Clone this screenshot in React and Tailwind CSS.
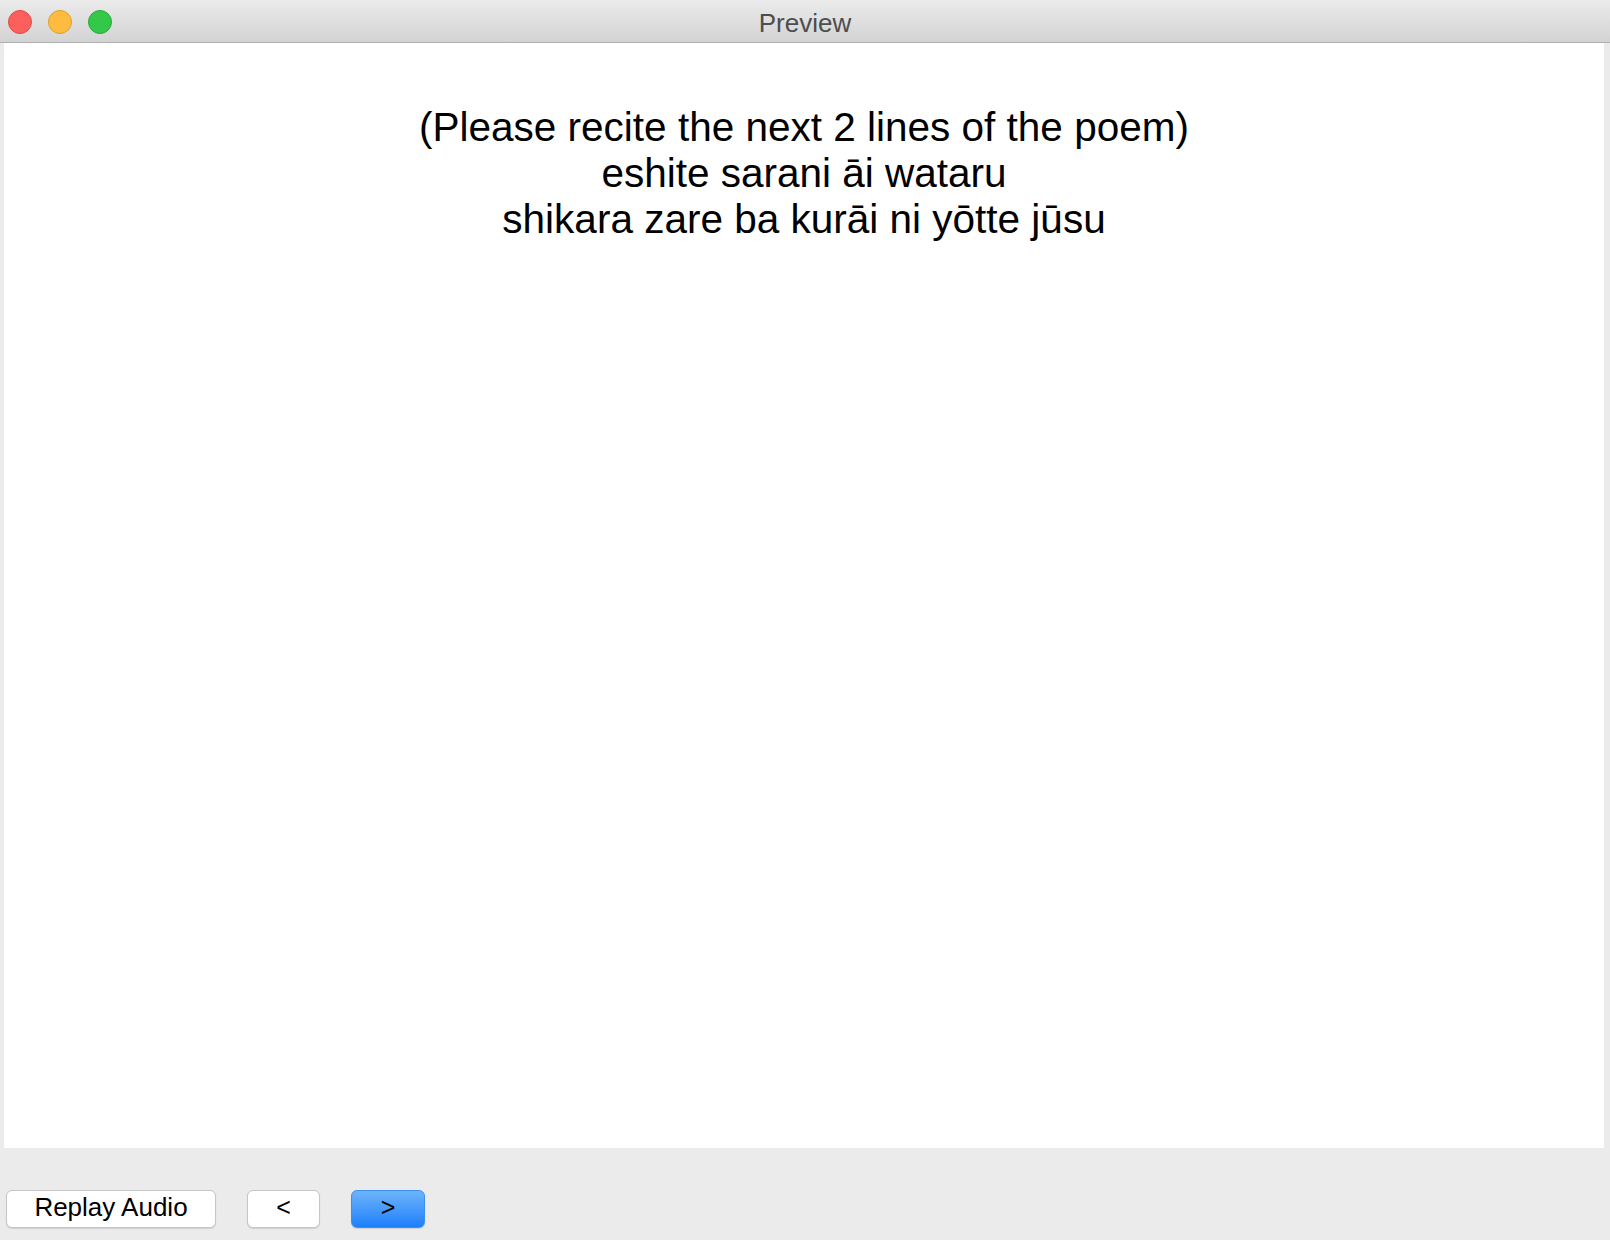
export default function App() {
  return (
    <div className="w-[1610px] h-[1240px] flex flex-col bg-[#ebebeb] overflow-hidden" style={{ fontFamily: '"Liberation Sans", Arial, sans-serif' }}>
      <div className="relative h-[43px] shrink-0 bg-gradient-to-b from-[#ebebeb] to-[#d3d3d3] border-b border-[#b1b1b1] flex items-center justify-center">
        <div className="absolute left-[8px] top-[10px] flex gap-[16px]">
          <div className="w-[24px] h-[24px] rounded-full bg-[#fc605c] border border-[#de4a45]" />
          <div className="w-[24px] h-[24px] rounded-full bg-[#fdbc40] border border-[#dea123]" />
          <div className="w-[24px] h-[24px] rounded-full bg-[#34c84a] border border-[#27aa35]" />
        </div>
        <span className="text-[26px] text-[#4d4d4d] leading-none mt-[4px]">Preview</span>
      </div>
      <div className="flex-1 flex flex-col pl-[4px] pr-[6px]">
        <div className="h-[1105px] bg-white flex flex-col items-center pt-[61px] text-[40.5px] leading-[46px] text-black text-center">
          <div>(Please recite the next 2 lines of the poem)</div>
          <div>eshite sarani āi wataru</div>
          <div>shikara zare ba kurāi ni yōtte jūsu</div>
        </div>
      </div>
      <div className="h-[92px] shrink-0 flex items-start pt-[42px] pl-[6px]">
        <button className="w-[210px] h-[38px] bg-white border border-[#c6c6c6] rounded-[6px] shadow-[0_1px_1px_rgba(0,0,0,0.12)] text-[26px] text-black leading-none pb-[5px]">Replay Audio</button>
        <button className="ml-[31px] w-[73px] h-[38px] bg-white border border-[#c6c6c6] rounded-[6px] shadow-[0_1px_1px_rgba(0,0,0,0.12)] text-[25px] text-black leading-none pb-[4px]">&lt;</button>
        <button className="ml-[31px] w-[74px] h-[38px] bg-gradient-to-b from-[#6cb3fa] to-[#1a7ffb] border border-[#3d8ff0] rounded-[6px] shadow-[0_1px_1px_rgba(0,0,0,0.12)] text-[25px] text-black leading-none pb-[4px]">&gt;</button>
      </div>
    </div>
  );
}
